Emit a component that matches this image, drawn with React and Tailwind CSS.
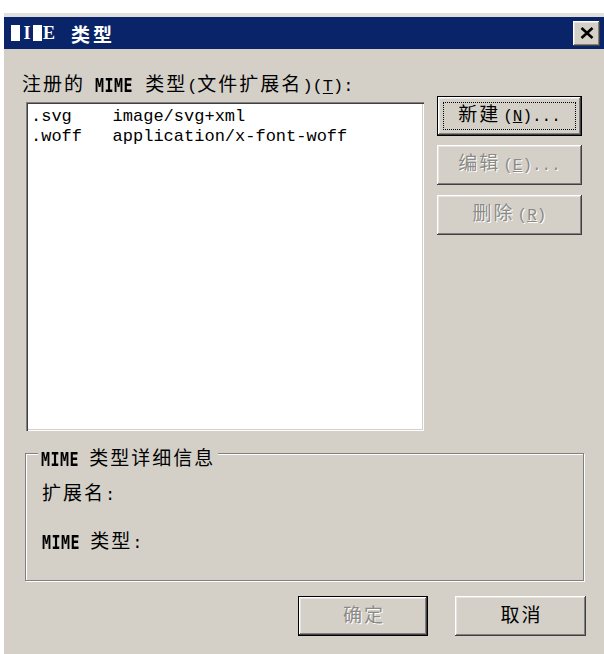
import React from "react";

const cjk = '"Noto Sans CJK SC", "Liberation Sans", sans-serif';

function C({ children, className = "" }) {
  return (
    <span className={`text-[19px] tracking-[2px] ${className}`} style={{ fontFamily: cjk }}>
      {children}
    </span>
  );
}

function M({ children, className = "" }) {
  return <span className={`font-['Liberation_Mono',monospace] ${className}`}>{children}</span>;
}

function Mime({ className = "" }) {
  return (
    <span className={`inline-block font-['DejaVu_Sans_Mono',monospace] font-bold text-[15px] tracking-[0.5px] scale-y-[1.25] leading-[18px] ${className}`}>
      MIME
    </span>
  );
}

function Raised({ def, focus, disabled, className = "", children }) {
  return (
    <div
      className={`flex items-center justify-center bg-[#d4d0c8] ${
        def
          ? "border border-black shadow-[inset_-1px_-1px_#404040,inset_1px_1px_#ffffff,inset_-2px_-2px_#808080,inset_2px_2px_#e6e3de]"
          : "shadow-[inset_-1px_-1px_#404040,inset_1px_1px_#ffffff,inset_-2px_-2px_#808080,inset_2px_2px_#e6e3de]"
      } ${className}`}
    >
      <div
        className={`flex items-center justify-center whitespace-pre pb-[3px] ${
          focus ? "border border-dotted border-black" : "border border-transparent"
        } w-[calc(100%-10px)] h-[calc(100%-10px)] ${
          disabled ? "text-[#8c8a86] [text-shadow:1px_1px_0_#ffffff]" : "text-black"
        }`}
      >
        <span className="leading-[20px]">{children}</span>
      </div>
    </div>
  );
}

export default function App() {
  return (
    <div className="w-[604px] h-[654px] bg-white overflow-hidden">
      <div className="ml-[4px] mt-[13px] w-[600px] h-[641px] bg-[#d4d0c8] border-t-[4px] border-[#e2e0dc] flex flex-col">
        {/* title bar */}
        <div className="h-[32px] bg-[#0a246a] flex items-center justify-between pl-[7px] pr-[4px]">
          <div className="flex items-center text-white font-bold leading-[17px]">
            <span className="inline-block w-[9px] h-[16px] bg-white" />
            <span className="ml-[2px] w-[10px] text-center font-['Liberation_Serif',serif] font-bold text-[18px]">I</span>
            <span className="inline-block w-[9px] h-[16px] bg-white ml-[1px]" />
            <span className="ml-[1px] w-[12px] text-center font-['Liberation_Serif',serif] font-bold text-[18px]">E</span>
            <span className="ml-[16px] text-[19px] tracking-[3px] font-bold" style={{ fontFamily: cjk }}>类型</span>
          </div>
          <div className="w-[27px] h-[25px] bg-[#d4d0c8] flex items-center justify-center shadow-[inset_-1px_-1px_#404040,inset_1px_1px_#ffffff,inset_-2px_-2px_#808080,inset_2px_2px_#e6e3de]">
            <svg width="14" height="12" viewBox="0 0 14 12">
              <path d="M1.5 1 L12.5 11 M12.5 1 L1.5 11" stroke="#000" strokeWidth="2.6" />
            </svg>
          </div>
        </div>

        {/* body */}
        <div className="flex-1 pl-[18px] pt-[24px] text-black">
          <div className="h-[19px] leading-[19px] whitespace-pre">
            <C>注册的</C>
            <Mime className="ml-[10px]" />
            <C className="ml-[12px]">类型</C>
            <M className="text-[17px]">(</M>
            <C>文件扩展名</C>
            <M className="text-[17px]">)(</M>
            <M className="text-[17px] underline underline-offset-2">T</M>
            <M className="text-[17px]">):</M>
          </div>

          <div className="mt-[4px] ml-[4px] flex">
            <div className="mt-[6px] w-[398px] h-[329px] bg-white shadow-[inset_1px_1px_#808080,inset_2px_2px_#404040,inset_-1px_-1px_#ffffff,inset_-2px_-2px_#d4d0c8] pt-[5px] pl-[5px] font-['Liberation_Mono',monospace] text-[17px] leading-[20px] whitespace-pre">
              <div>.svg    image/svg+xml</div>
              <div>.woff   application/x-font-woff</div>
            </div>
            <div className="ml-[13px] flex flex-col">
              <Raised def focus className="w-[145px] h-[40px]">
                <C>新建</C>
                <M className="text-[16px] ml-[3px]">(<span className="underline">N</span>)...</M>
              </Raised>
              <Raised disabled className="w-[145px] h-[40px] mt-[9px]">
                <C>编辑</C>
                <M className="text-[16px] ml-[3px]">(<span className="underline">E</span>)...</M>
              </Raised>
              <Raised disabled className="w-[145px] h-[40px] mt-[10px]">
                <C>删除</C>
                <M className="text-[16px] ml-[3px]">(<span className="underline">R</span>)</M>
              </Raised>
            </div>
          </div>

          {/* group box */}
          <div className="relative mt-[22px] ml-[3px] w-[559px] h-[128px] border border-[#808080] shadow-[inset_1px_1px_#ffffff,1px_1px_#ffffff]">
            <div className="absolute left-[12px] top-[-7px] px-[3px] bg-[#d4d0c8] h-[19px] leading-[19px] whitespace-pre">
              <Mime />
              <C className="ml-[10px]">类型详细信息</C>
            </div>
            <div className="pl-[16px] pt-[28px] flex flex-col">
              <div className="h-[19px] leading-[19px] whitespace-pre">
                <C>扩展名</C>
                <M className="text-[17px]">:</M>
              </div>
              <div className="mt-[29px] h-[19px] leading-[19px] whitespace-pre">
                <Mime />
                <C className="ml-[10px]">类型</C>
                <M className="text-[17px]">:</M>
              </div>
            </div>
          </div>

          {/* bottom buttons */}
          <div className="mt-[15px] ml-[276px] flex">
            <Raised def disabled className="w-[130px] h-[40px]">
              <C className="ml-[2px]">确定</C>
            </Raised>
            <Raised className="w-[131px] h-[40px] ml-[27px]">
              <C className="ml-[2px]">取消</C>
            </Raised>
          </div>
        </div>
      </div>
    </div>
  );
}
